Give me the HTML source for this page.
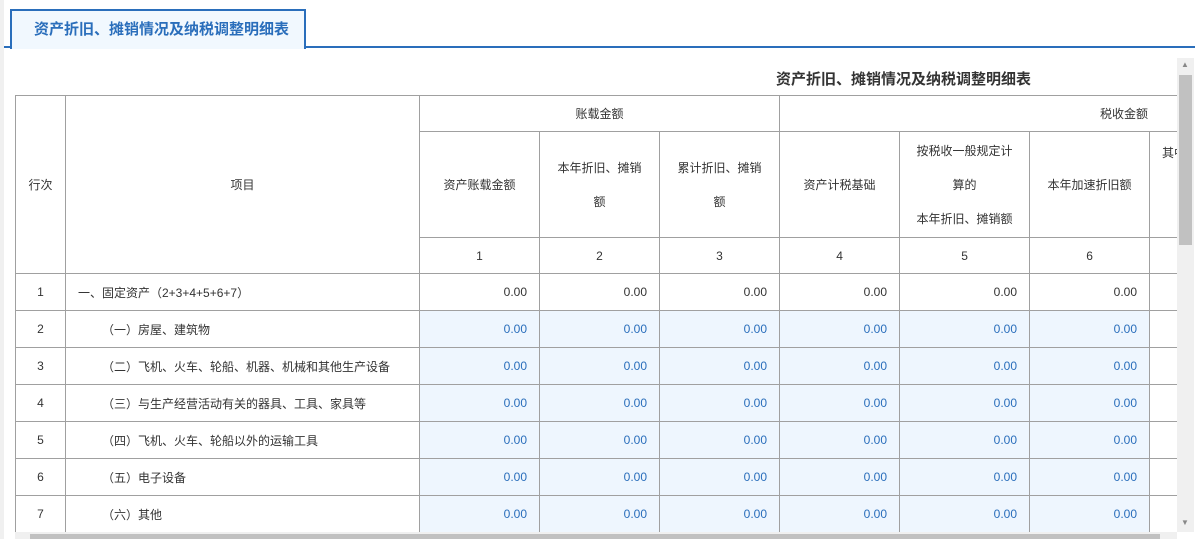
<!DOCTYPE html>
<html><head><meta charset="utf-8"><style>
*{margin:0;padding:0;box-sizing:border-box}
body{width:1195px;height:539px;overflow:hidden;background:#fff;font-family:"Liberation Sans","Noto Sans CJK SC",sans-serif;font-size:12px;color:#333;position:relative}
.lstrip{position:absolute;left:0;top:0;width:4px;height:539px;background:#f0f0f0}
.tab{position:absolute;left:10px;top:9px;width:296px;height:40px;border:2px solid #2a6ebb;border-bottom:none;background:#f1f8fe;color:#2a6ebb;font-weight:bold;font-size:15px;line-height:38px;padding-left:22px;z-index:2}
.line{position:absolute;left:4px;top:46px;width:1191px;height:2px;background:#2a6ebb}
.title{position:absolute;left:776px;top:68px;font-size:15px;font-weight:bold;color:#333}
.wrap{position:absolute;left:15px;top:95px;width:1162px;height:437px;overflow:hidden}
table{border-collapse:collapse;table-layout:fixed;width:1300px}
td{border:1px solid #a0a0a0;text-align:center;vertical-align:middle;color:#333}
.r{text-align:right;padding-right:12px}
.l{text-align:left;padding-left:12px}
.l2{text-align:left;padding-left:36px}
.b{background:#eef6fe;color:#2a6ebb}
tr.d td{height:37px}
.vs{position:absolute;left:1177px;top:58px;width:17px;height:474px;background:#f0f0f0}
.vt{position:absolute;left:1179px;top:75px;width:13px;height:170px;background:#c1c1c1}
.hs{position:absolute;left:15px;top:532px;width:1162px;height:7px;background:#f0f0f0}
.ht{position:absolute;left:30px;top:534px;width:1130px;height:5px;background:#c1c1c1}
.arr{position:absolute;font-size:8px;color:#888}
</style></head><body>
<div class="lstrip"></div>
<div class="line"></div>
<div class="tab">资产折旧、摊销情况及纳税调整明细表</div>
<div class="title">资产折旧、摊销情况及纳税调整明细表</div>
<div class="wrap"><table>
<colgroup><col style="width:50px"><col style="width:354px"><col style="width:120px"><col style="width:120px"><col style="width:120px"><col style="width:120px"><col style="width:130px"><col style="width:120px"><col style="width:166px"></colgroup>
<tr style="height:36px"><td rowspan="3">行次</td><td rowspan="3">项目</td><td colspan="3">账载金额</td><td colspan="4" style="text-align:left;padding-left:320px">税收金额</td></tr>
<tr style="height:106px"><td>资产账载金额</td><td style="line-height:34px">本年折旧、摊销<br>额</td><td style="line-height:34px">累计折旧、摊销<br>额</td><td>资产计税基础</td><td style="line-height:34px">按税收一般规定计<br>算的<br>本年折旧、摊销额</td><td>本年加速折旧额</td><td style="text-align:left;padding-left:12px;vertical-align:top;padding-top:12px">其中</td></tr>
<tr style="height:36px"><td>1</td><td>2</td><td>3</td><td>4</td><td>5</td><td>6</td><td></td></tr>
<tr class="d"><td>1</td><td class="l">一、固定资产（2+3+4+5+6+7）</td><td class="r">0.00</td><td class="r">0.00</td><td class="r">0.00</td><td class="r">0.00</td><td class="r">0.00</td><td class="r">0.00</td><td></td></tr>
<tr class="d"><td>2</td><td class="l2">（一）房屋、建筑物</td><td class="r b">0.00</td><td class="r b">0.00</td><td class="r b">0.00</td><td class="r b">0.00</td><td class="r b">0.00</td><td class="r b">0.00</td><td></td></tr>
<tr class="d"><td>3</td><td class="l2">（二）飞机、火车、轮船、机器、机械和其他生产设备</td><td class="r b">0.00</td><td class="r b">0.00</td><td class="r b">0.00</td><td class="r b">0.00</td><td class="r b">0.00</td><td class="r b">0.00</td><td></td></tr>
<tr class="d"><td>4</td><td class="l2">（三）与生产经营活动有关的器具、工具、家具等</td><td class="r b">0.00</td><td class="r b">0.00</td><td class="r b">0.00</td><td class="r b">0.00</td><td class="r b">0.00</td><td class="r b">0.00</td><td></td></tr>
<tr class="d"><td>5</td><td class="l2">（四）飞机、火车、轮船以外的运输工具</td><td class="r b">0.00</td><td class="r b">0.00</td><td class="r b">0.00</td><td class="r b">0.00</td><td class="r b">0.00</td><td class="r b">0.00</td><td></td></tr>
<tr class="d"><td>6</td><td class="l2">（五）电子设备</td><td class="r b">0.00</td><td class="r b">0.00</td><td class="r b">0.00</td><td class="r b">0.00</td><td class="r b">0.00</td><td class="r b">0.00</td><td></td></tr>
<tr class="d"><td>7</td><td class="l2">（六）其他</td><td class="r b">0.00</td><td class="r b">0.00</td><td class="r b">0.00</td><td class="r b">0.00</td><td class="r b">0.00</td><td class="r b">0.00</td><td></td></tr>
</table></div>
<div class="vs"></div><div class="vt"></div>
<div class="arr" style="left:1181px;top:60px">▲</div>
<div class="arr" style="left:1181px;top:518px">▼</div>
<div class="hs"></div><div class="ht"></div>
</body></html>
